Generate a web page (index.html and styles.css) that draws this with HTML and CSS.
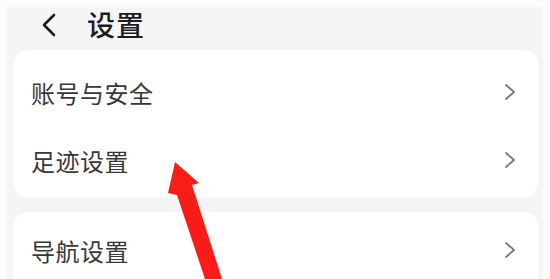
FILE: index.html
```html
<!DOCTYPE html>
<html lang="zh-CN">
<head>
    <meta charset="UTF-8">
    <meta name="viewport" content="width=device-width, initial-scale=1.0">
    <title>设置</title>

<link rel="stylesheet" href="styles.css">

</head>
<body>
    <div class="screen">
        <div class="header">
            <svg class="back" width="20" height="24" viewBox="0 0 20 24">
                <path d="M15 2 L5 12 L15 22" fill="none" stroke="#1a1a1a" stroke-width="2.6" stroke-linecap="round" stroke-linejoin="round"/>
            </svg>
            <h1 class="title">设置</h1>
        </div>

        <div class="card card-first">
            <div class="row">
                <span class="label">账号与安全</span>
                <svg class="more" width="12" height="18" viewBox="0 0 12 18">
                    <path d="M2 2 L10 9 L2 16" fill="none" stroke="#777777" stroke-width="1.8" stroke-linecap="round" stroke-linejoin="round"/>
                </svg>
            </div>
            <div class="row">
                <span class="label">足迹设置</span>
                <svg class="more" width="12" height="18" viewBox="0 0 12 18">
                    <path d="M2 2 L10 9 L2 16" fill="none" stroke="#777777" stroke-width="1.8" stroke-linecap="round" stroke-linejoin="round"/>
                </svg>
            </div>
        </div>

        <div class="card card-second">
            <div class="row row-last">
                <span class="label">导航设置</span>
                <svg class="more" width="12" height="18" viewBox="0 0 12 18">
                    <path d="M2 2 L10 9 L2 16" fill="none" stroke="#777777" stroke-width="1.8" stroke-linecap="round" stroke-linejoin="round"/>
                </svg>
            </div>
        </div>
    </div>

    <!-- red pointer arrow drawn over the page -->
    <svg class="pointer" width="80" height="129" viewBox="0 0 80 129">
        <polygon points="25,12 49,33 42,35 72,129 55,129 27,45 18,43" fill="#fb1c17"/>
    </svg>
</body>
</html>
```

FILE: styles.css
```css
body {
    font-family: 'Noto Sans CJK SC', 'Noto Sans', sans-serif;
    background-color: #fbfbfb;
    margin: 0;
    padding: 0;
    height: 279px;
    overflow: hidden;
}

.screen {
    background-color: #f5f5f5;
    margin: 7px 7px 0 7px;
}

.header {
    display: flex;
    align-items: center;
    height: 35px;
    padding-left: 32px;
    padding-bottom: 8px;
}

.back {
    margin-right: 28px;
}

.title {
    margin: 0;
    font-size: 28px;
    line-height: 35px;
    font-weight: 500;
    color: #1e1e1e;
    letter-spacing: 1px;
}

.card {
    background-color: #ffffff;
    border-radius: 14px;
    margin: 0 5px 0 7px;
    padding: 0 22px 0 17px;
}

.card-first {
    padding-top: 8px;
    padding-bottom: 3px;
    margin-bottom: 15px;
}

.card-second {
    padding-top: 9px;
    border-radius: 14px 14px 0 0;
}

.row {
    display: flex;
    align-items: center;
    justify-content: space-between;
    height: 68px;
}

.row-last {
    height: 58px;
}

.label {
    font-size: 24px;
    color: #383838;
    letter-spacing: 0.5px;
}

.more {
    display: block;
}

.pointer {
    position: absolute;
    left: 150px;
    top: 150px;
}
```
